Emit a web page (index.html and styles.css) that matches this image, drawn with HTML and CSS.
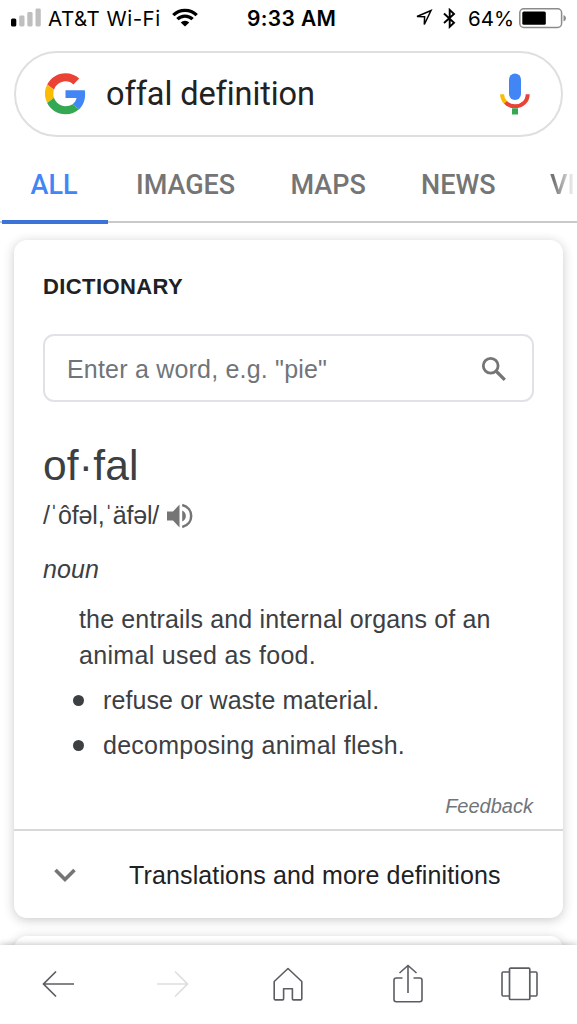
FILE: index.html
```html
<!DOCTYPE html>
<html lang="en">
<head>
<meta charset="utf-8">
<title>offal definition</title>
<link rel="stylesheet" href="styles.css">
</head>
<body>
<div class="screen">
  <header class="status">
    <div class="status-left">
      <svg class="signal" width="30" height="20" viewBox="0 0 30 20"><rect x="0" y="10.5" width="5.3" height="8" rx="1.6" fill="#000"/><rect x="8.2" y="7.5" width="5.3" height="11" rx="1.4" fill="#bfbfbf"/><rect x="16.3" y="4" width="5.3" height="14.500" rx="1.4" fill="#bfbfbf"/><rect x="24.500" y="0.500" width="5.300" height="18" rx="1.4" fill="#bfbfbf"/></svg>
      <span class="carrier">AT&amp;T Wi-Fi</span>
      <svg class="wifi" width="26" height="20" viewBox="0 0 26 20"><path d="M1.300 7.200A16.500 16.500 0 0 1 24.700 7.200M5.400 11.200A10.800 10.800 0 0 1 20.600 11.200" fill="none" stroke="#000" stroke-width="3.300"/><path d="M13 18.600 8.700 14.500a6 6 0 0 1 8.600 0z"/></svg>
    </div>
    <div class="clock">9:33 AM</div>
    <div class="status-right">
      <svg class="location" width="18" height="18" viewBox="0 0 18 18"><path d="M2 7.500 16 1.500 9.300 15.500 9.600 7.700z" fill="none" stroke="#000" stroke-width="1.500"/></svg>
      <svg class="bluetooth" width="13" height="22" viewBox="0 0 13 22"><path d="M1 5.500 11 14.800 6.700 18.900V1.900L11 6 1 15" fill="none" stroke="#000" stroke-width="1.900"/></svg>
      <span class="percent">64%</span>
      <svg class="battery" width="48" height="21" viewBox="0 0 48 21"><rect x=".8" y=".8" width="41.800" height="18.700" rx="4" fill="#fff" stroke="#8b8b8b" stroke-width="1.500"/><rect x="3.300" y="3.500" width="23.500" height="13.300" rx="1.500"/><path d="M44.500 7v6.500q2.500-1 2.500-3.250T44.500 7" fill="#8b8b8b"/></svg>
    </div>
  </header>

  <div class="search">
    <svg class="logo" width="41" height="42" viewBox="3 3 42 42.500"><path fill="#ea4335" d="M24 9.500c3.540 0 6.710 1.220 9.210 3.600l6.850-6.850C35.900 2.380 30.470 0 24 0 14.620 0 6.510 5.380 2.560 13.220l7.980 6.190C12.430 13.720 17.740 9.500 24 9.500z" transform="translate(3 3) scale(.875)"/><path fill="#4285f4" d="M46.980 24.550c0-1.570-.15-3.090-.38-4.550H24v9.020h12.940c-.58 2.960-2.260 5.480-4.780 7.180l7.730 6c4.510-4.180 7.090-10.360 7.090-17.650z" transform="translate(3 3) scale(.875)"/><path fill="#fbbc05" d="M10.530 28.590a14.500 14.500 0 0 1 0-9.180l-7.980-6.190a24 24 0 0 0 0 21.560z" transform="translate(3 3) scale(.875)"/><path fill="#34a853" d="M24 48c6.480 0 11.930-2.130 15.890-5.810l-7.730-6c-2.150 1.450-4.920 2.300-8.160 2.300-6.260 0-11.570-4.220-13.470-9.910l-7.980 6.190C6.510 42.620 14.620 48 24 48z" transform="translate(3 3) scale(.875)"/></svg>
    <span class="query">offal definition</span>
    <svg class="mic" width="30" height="42" viewBox="0 0 30 42"><path d="M2.100 21.200c0 3.600 1.300 6.100 3.500 8.300" fill="none" stroke="#fbbc05" stroke-width="4"/><path d="M5.500 29.300c2.500 2.700 5.800 4 9.500 4 7.200 0 12.700-5 12.700-12.100" fill="none" stroke="#ea4335" stroke-width="4"/><path fill="#34a853" d="M12 35.300h6V41.500h-6z"/><rect x="9" y=".5" width="12" height="26.500" rx="6" fill="#4285f4"/></svg>
  </div>

  <nav class="tabs">
    <span class="tab active">ALL</span>
    <span class="tab images">IMAGES</span>
    <span class="tab maps">MAPS</span>
    <span class="tab news">NEWS</span>
    <span class="tab videos">VI</span>
  </nav>

  <main class="results">
    <section class="card">
      <div class="entry">
        <h2 class="label">DICTIONARY</h2>
        <div class="lookup">
          <span class="placeholder">Enter a word, e.g. "pie"</span>
          <svg class="glass" width="26" height="26" viewBox="0 0 26 26"><circle cx="9.700" cy="9.700" r="7.400" fill="none" stroke="#757575" stroke-width="2.800"/><path d="m15 15 8.800 8.800" fill="none" stroke="#757575" stroke-width="3.300"/></svg>
        </div>
        <h1 class="headword">of·fal</h1>
        <div class="pron"><span class="ipa">/ˈôfəl,ˈäfəl/</span><svg class="speaker" width="26" height="28" viewBox="0 0 26 28"><path fill="#757575" d="M0 9.500h6L12.500 2.500v23l-6.500-7H0zM15.200 8.500c4.900 2.300 4.900 8.700 0 11z"/><path d="M15.200 3c12 3 12 19 0 22" fill="none" stroke="#757575" stroke-width="2.500"/></svg></div>
        <div class="pos">noun</div>
        <div class="sense"><div class="line-one">the entrails and internal organs of an</div><div class="line-two">animal used as food.</div></div>
        <ul class="subsenses">
          <li class="sub"><span class="dot"></span><span class="refuse">refuse or waste material.</span></li>
          <li class="sub"><span class="dot"></span><span class="decomposing">decomposing animal flesh.</span></li>
        </ul>
        <div class="feedback">Feedback</div>
      </div>
      <div class="more">
        <svg class="chevron" width="22" height="15" viewBox="0 0 22 15"><path d="m1.500 2 9.500 9.500L20.500 2" fill="none" stroke="#757575" stroke-width="3.600"/></svg>
        <span class="more-text">Translations and more definitions</span>
      </div>
    </section>
    <section class="card next"></section>
  </main>

  <footer class="toolbar">
    <svg class="back" width="32" height="28" viewBox="0 0 32 28"><path d="M32 14H1.500M14 1.500 1.500 14 14 26.500" fill="none" stroke="#5b5d63" stroke-width="1.700"/></svg>
    <svg class="forward" width="32" height="28" viewBox="0 0 32 28"><path d="M0 14h30.500M18 1.500 30.500 14 18 26.500" fill="none" stroke="#dedede" stroke-width="1.700"/></svg>
    <svg class="home" width="30" height="34" viewBox="0 0 30 34"><path d="M1.200 14.500 15 1.500l13.800 13V31.700q0 1.200-1.200 1.200h-7.200q-1 0-1-1V21.800h-8.800V31.900q0 1-1 1H2.400q-1.200 0-1.200-1.200z" fill="none" stroke="#5b5d63" stroke-width="1.600" stroke-linejoin="round"/></svg>
    <svg class="share" width="30" height="39" viewBox="0 0 30 39"><path d="M9.500 14H3.200Q1 14 1 16.200v19.300q0 2.200 2.200 2.200h23.600q2.200 0 2.200-2.200V16.200Q29 14 26.800 14h-6.300M15 29V1.500M6.500 9 15 1.500 23.500 9" fill="none" stroke="#5b5d63" stroke-width="1.600"/></svg>
    <svg class="pages" width="37" height="34" viewBox="0 0 37 34"><path d="M8.500 5H2.200Q1 5 1 6.200v21.600Q1 29 2.200 29h6.300M28.500 5h6.300Q36 5 36 6.200v21.600q0 1.200-1.200 1.200h-6.300" fill="none" stroke="#5b5d63" stroke-width="1.600"/><rect x="8.500" y="1.200" width="20.300" height="31.300" rx="1" fill="none" stroke="#5b5d63" stroke-width="1.700"/></svg>
  </footer>
</div>
</body>
</html>
```
FILE: styles.css
```css
* { box-sizing: border-box; }
body { margin: 0; background: #fff; font-family: "Liberation Sans", Arial, sans-serif; color: #3c4043; }
h1, h2, ul { margin: 0; padding: 0; font-weight: 400; list-style: none; }
svg { display: block; flex: none; }
span, div { white-space: nowrap; }
.screen { width: 577px; height: 1024px; overflow: hidden; display: flex; flex-direction: column; }

.status { height: 51px; flex: none; display: grid; grid-template-columns: 236px 1fr 162px; font-family: Inter, sans-serif; font-size: 20.5px; line-height: 38px; color: #000; }
.status-left { display: flex; padding-left: 11px; }
.signal { margin-top: 8px; }
.carrier { margin-left: 7px; width: 116px; letter-spacing: .5px; }
.wifi { margin: 8px 0 0 8px; }
.clock { padding-left: 11px; font-size: 21px; font-weight: 600; letter-spacing: .35px; }
.status-right { display: flex; }
.location { margin-top: 9px; }
.bluetooth { margin: 8px 0 0 10px; }
.percent { width: 46px; margin-left: 12px; }
.battery { margin: 8px 0 0 5px; }

.search { flex: none; height: 86px; margin: 0 14px; padding: 0 31px 0 29px; display: flex; align-items: center; border: 2px solid #dfdfdf; border-radius: 43px; }
.logo { width: 41px; height: 42px; }
.query { font: 400 32.5px/42px Roboto, sans-serif; letter-spacing: -.1px; color: #222; margin-left: 20px; flex: 1; }

.tabs { flex: none; height: 86px; display: flex; font: 500 27px/97px Roboto, sans-serif; color: #757575; border-bottom: 2px solid #c9c9c9; padding-left: 2px; }
.tab { flex: none; height: 87px; }
.active { width: 106px; padding-left: 28.500px; color: #4285f4; border-bottom: 4px solid #3b73d9; }
.images { width: 154px; padding-left: 28px; }
.maps { width: 131px; padding-left: 28.500px; }
.news { width: 129px; padding-left: 28px; }
.videos { margin-left: 28px; background: linear-gradient(90deg, #757575 15%, #eee 90%); background-clip: text; -webkit-background-clip: text; color: transparent; height: 80px; }

.results { flex: 1; min-height: 0; padding: 17px 14px 0; overflow: hidden; }
.card { background: #fff; border-radius: 13px; box-shadow: 0 2px 11px rgba(32,33,36,.24); height: 678px; }
.next { margin-top: 18px; height: 100px; }
.entry { height: 591px; padding: 35px 29px 0; border-bottom: 2px solid #d8d8d8; }
.label { font-size: 22px; line-height: 24px; font-weight: 700; color: #202124; letter-spacing: .4px; }
.lookup { height: 68px; margin-top: 35px; border: 2px solid #e1e2e8; border-radius: 11px; display: flex; justify-content: space-between; align-items: center; padding: 2px 25px 0 22px; }
.placeholder { font-size: 25px; line-height: 30px; margin-bottom: 1px; color: #70757a; letter-spacing: .2px; }
.headword { margin-top: 40px; font-size: 42.500px; line-height: 48px; letter-spacing: .2px; }
.pron { display: flex; align-items: center; height: 30px; margin-top: 10px; font-size: 25px; }
.ipa { width: 124px; letter-spacing: -.15px; }
.speaker { margin-top: 2px; }
.pos { margin-top: 25px; font-size: 25px; line-height: 28px; font-style: italic; letter-spacing: .1px; }
.sense { margin: 18px 0 0 36px; font-size: 25px; line-height: 36px; letter-spacing: .2px; }
.line-one { letter-spacing: .15px; }
.line-two { letter-spacing: .32px; }
.subsenses { margin: 5px 0 0 30px; font-size: 25px; }
.sub { height: 45px; display: flex; align-items: center; }
.dot { width: 11px; height: 11px; border-radius: 50%; background: #3c4043; margin-right: 19px; }
.refuse { letter-spacing: .1px; }
.decomposing { letter-spacing: .24px; }
.feedback { margin: 26px 1px 0 0; font-size: 20px; line-height: 24px; font-style: italic; color: #70757a; text-align: right; }
.more { height: 87px; display: flex; align-items: center; padding: 2px 0 0 40px; }
.chevron { margin-bottom: 1px; }
.more-text { margin-left: 53px; font-size: 25px; color: #202124; letter-spacing: .13px; }

.toolbar { flex: none; height: 79px; background: #fff; display: flex; padding-left: 42px; position: relative; box-shadow: 0 -1px 6px rgba(32,33,36,.25); }
.back, .forward { margin-top: 25px; }
.forward { margin-left: 83px; }
.home { margin: 22px 0 0 84px; }
.share { margin: 19px 0 0 90px; }
.pages { margin: 22px 0 0 77.500px; }
```
